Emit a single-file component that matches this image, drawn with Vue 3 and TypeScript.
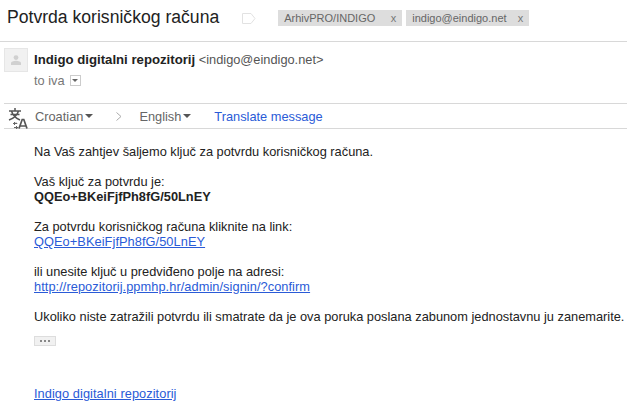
<script setup lang="ts">
const tags = [
  { name: 'ArhivPRO/INDIGO' },
  { name: 'indigo@eindigo.net' },
]
</script>

<template>
  <div class="page">
    <header class="subject">
      <h1>Potvrda korisničkog računa</h1>
      <svg class="label" width="14" height="11" viewBox="0 0 14 11"><path d="M.5.5h8.500l4 5-4 5H.5z" fill="#fff" stroke="#e2e2e2"/></svg>
      <span v-for="t in tags" :key="t.name" class="tag"><span>{{ t.name }}</span><span class="x">x</span></span>
    </header>
    <section class="sender">
      <div class="avatar">
        <svg width="10" height="10" viewBox="0 0 10 10"><circle cx="5" cy="2.600" r="2.400" fill="#d0d0d0"/><path d="M0 10V8c0-1.200 2.500-2.200 5-2.200s5 1 5 2.200v2z" fill="#d0d0d0"/></svg>
      </div>
      <div class="who">
        <div class="line"><strong>Indigo digitalni repozitorij</strong> <span class="addr">&lt;indigo@eindigo.net&gt;</span></div>
        <div class="to">to iva <span class="drop"><i></i></span></div>
      </div>
    </section>
    <section class="translate">
      <svg class="tr-icon" width="20" height="21" viewBox="0 0 20 21">
        <path d="M1 3h12M7 0v3M3.500 3c1 3.500 3.500 7 8.500 9M10.500 3c-1 3.500-4 7-9.500 9M2.500 6.500h9" fill="none" stroke="#555" stroke-width="1.500"/>
        <path d="M5 15.500h4l-1-1M6 19.500h4l-1 1M6.500 14v3M8.500 18v3" fill="none" stroke="#666"/>
        <path d="M11 20.500l3.200-9h1.600l3.200 9M12.500 18h5" fill="none" stroke="#555" stroke-width="1.700"/>
      </svg>
      <span class="lang first">Croatian<i></i></span>
      <svg class="chev" width="6" height="9" viewBox="0 0 6 9"><path d="M.5.500l4.500 4-4.500 4" fill="none" stroke="#aaa"/></svg>
      <span class="lang">English<i></i></span>
      <a class="action">Translate message</a>
    </section>
    <article class="body">
      <p>Na Vaš zahtjev šaljemo ključ za potvrdu korisničkog računa.</p>
      <p>Vaš ključ za potvrdu je:<br><b>QQEo+BKeiFjfPh8fG/50LnEY</b></p>
      <p>Za potvrdu korisničkog računa kliknite na link:<br><a>QQEo+BKeiFjfPh8fG/50LnEY</a></p>
      <p>ili unesite ključ u predviđeno polje na adresi:<br><a>http://repozitorij.ppmhp.hr/admin/signin/?confirm</a></p>
      <p class="last">Ukoliko niste zatražili potvrdu ili smatrate da je ova poruka poslana zabunom jednostavnu ju zanemarite.</p>
      <div class="more"><i></i><i></i><i></i></div>
      <a class="sig">Indigo digitalni repozitorij</a>
    </article>
  </div>
</template>

<style>
html, body { background: #fff; overflow: hidden; }
</style>

<style scoped>
.page { width: 627px; height: 405px; overflow: hidden; font-family: "Liberation Sans", Arial, sans-serif; font-size: 13px; color: #222; }
.subject { height: 35px; padding: 0 0 6px 7px; border-bottom: 1px solid #d8d8d8; display: flex; align-items: center; box-sizing: content-box; }
h1 { margin: 0; font-size: 17.6px; font-weight: 400; color: #222; white-space: nowrap; }
.label { margin-left: 23px; margin-top: 1px; margin-right: 22px; }
.tag { background: #ddd; color: #666; font-size: 11px; height: 16px; line-height: 16px; display: flex; justify-content: space-between; padding: 0 6px; margin-right: 4px; margin-top: 1px; box-sizing: border-box; }
.tag:nth-of-type(1) { width: 124px; }
.tag:nth-of-type(2) { width: 123px; }
.x { color: #777; }
.sender { display: flex; padding: 6px 0 0 4px; height: 61px; box-sizing: border-box; }
.avatar { width: 24px; height: 24px; background: #f1f1f1; border: 1px solid #e6e6e6; box-sizing: border-box; display: flex; align-items: center; justify-content: center; margin-right: 6px; }
.who { padding-top: 3px; }
.line { line-height: 17px; white-space: nowrap; font-size: 12.8px; }
.line strong { color: #222; font-size: 13.2px; }
.addr { color: #555; }
.to { color: #777; font-size: 12.8px; line-height: 17px; margin-top: 4px; display: flex; align-items: center; }
.drop { width: 11px; height: 11px; border: 1px solid #ccc; margin-left: 5px; display: flex; align-items: center; justify-content: center; box-sizing: border-box; }
.drop i { border: 3px solid transparent; border-top: 3px solid #666; border-bottom: 0; }
.translate { margin-left: 4px; height: 26px; box-sizing: border-box; border: 1px solid #d8d8d8; border-width: 1px 0; display: flex; align-items: center; color: #666; font-size: 12.8px; }
.tr-icon { margin: 4px 0 0 4px; }
.lang { display: flex; align-items: center; }
.lang i { border: 4px solid transparent; border-top: 4px solid #555; border-bottom: 0; margin-left: 2px; }
.first { margin-left: 7px; }
.chev { margin: 0 17px 0 23px; }
.action { color: #2a5bd7; margin-left: 23px; }
.body { padding: 0 0 0 34px; color: #222; line-height: 15px; font-size: 12.8px; white-space: nowrap; margin-top: 15px; }
.body p { margin: 0 0 15px; }
.body p.last { margin-bottom: 12px; }
.body a { color: #2a5bd7; text-decoration: underline; letter-spacing: .06px; }
.more { width: 22px; height: 10px; background: #f1f1f1; border: 1px solid #ddd; box-sizing: border-box; display: flex; align-items: center; justify-content: center; gap: 2px; }
.more i { width: 2px; height: 2px; background: #888; }
.sig { display: block; margin-top: 40px; }
</style>
